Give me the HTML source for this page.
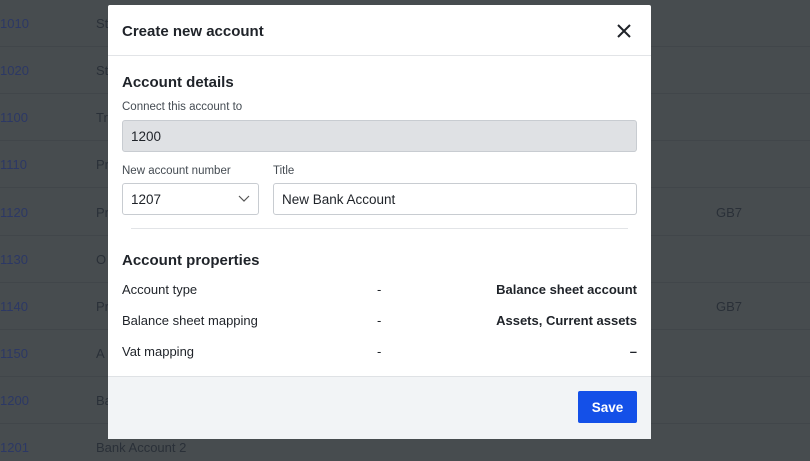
<!DOCTYPE html><html style="width:810px;height:461px;overflow:hidden"><head><style>
body{margin:0;width:810px;height:461px;background:#474c4f;font-family:"Liberation Sans",sans-serif;position:relative;overflow:hidden}
.r{position:absolute;left:0;width:810px;height:46px;border-bottom:1px solid #41464a;font-size:13px;color:#2a3038}
.r .n{position:absolute;left:0;top:16px;color:#2c3865}
.r .t{position:absolute;left:96px;top:16px}
.r .g{position:absolute;left:716px;top:16px}
.m{position:absolute;left:108px;top:5px;width:543px;height:433px;background:#fff;border-radius:2px;color:#1f2329}
.a{position:absolute}
.inp{position:absolute;border:1px solid #c8ccd1;border-radius:3px;height:32px;box-sizing:border-box;font-size:13.5px;padding:8px 8px;}
.lbl{font-size:11.5px;color:#444b52;position:absolute}
.row{position:absolute;left:14px;right:14px;font-size:13px}
</style></head><body>
<div class="r" style="top:0"><span class="n">1010</span><span class="t">St</span></div>
<div class="r" style="top:47px"><span class="n">1020</span><span class="t">St</span></div>
<div class="r" style="top:94px"><span class="n">1100</span><span class="t">Tr</span></div>
<div class="r" style="top:141px"><span class="n">1110</span><span class="t">Pr</span></div>
<div class="r" style="top:189px"><span class="n">1120</span><span class="t">Pr</span><span class="g">GB7</span></div>
<div class="r" style="top:236px"><span class="n">1130</span><span class="t">O</span></div>
<div class="r" style="top:283px"><span class="n">1140</span><span class="t">Pr</span><span class="g">GB7</span></div>
<div class="r" style="top:330px"><span class="n">1150</span><span class="t">A</span></div>
<div class="r" style="top:377px"><span class="n">1200</span><span class="t">Ba</span></div>
<div class="r" style="top:424px"><span class="n">1201</span><span class="t">Bank Account 2</span></div>
<div class="m">
<div class="a" style="left:14px;top:18px;font-size:15px;font-weight:bold">Create new account</div>
<svg class="a" style="left:508px;top:18px" width="16" height="16"><path d="M2 2L14 14M14 2L2 14" stroke="#1f2329" stroke-width="2"/></svg>
<div class="a" style="left:0;top:50px;width:543px;border-top:1px solid #e2e4e7"></div>
<div class="a" style="left:14px;top:69px;font-size:15px;font-weight:bold">Account details</div>
<div class="lbl" style="left:14px;top:96px">Connect this account to</div>
<div class="inp" style="left:14px;top:115px;width:515px;background:#dfe1e4">1200</div>
<div class="lbl" style="left:14px;top:160px">New account number</div>
<div class="inp" style="left:14px;top:178px;width:137px">1207</div>
<svg class="a" style="left:130px;top:190px" width="12" height="8"><path d="M1 1L6 6L11 1" stroke="#555" fill="none" stroke-width="1.2"/></svg>
<div class="lbl" style="left:165px;top:160px">Title</div>
<div class="inp" style="left:165px;top:178px;width:364px">New Bank Account</div>
<div class="a" style="left:23px;top:223px;width:497px;border-top:1px solid #e2e4e7"></div>
<div class="a" style="left:14px;top:247px;font-size:15px;font-weight:bold">Account properties</div>
<div class="row" style="top:277px">Account type<span class="a" style="left:255px">-</span><b class="a" style="right:0">Balance sheet account</b></div>
<div class="row" style="top:308px">Balance sheet mapping<span class="a" style="left:255px">-</span><b class="a" style="right:0">Assets, Current assets</b></div>
<div class="row" style="top:339px">Vat mapping<span class="a" style="left:255px">-</span><b class="a" style="right:0">–</b></div>
<div class="a" style="left:0;top:371px;width:543px;height:62px;background:#f2f4f6;border-top:1px solid #dfe2e5"></div>
<div class="a" style="left:470px;top:386px;width:59px;height:32px;background:#1450e8;border-radius:2px;color:#fff;font-weight:bold;font-size:13.5px;text-align:center;line-height:33px">Save</div>
</div>
</body></html>
